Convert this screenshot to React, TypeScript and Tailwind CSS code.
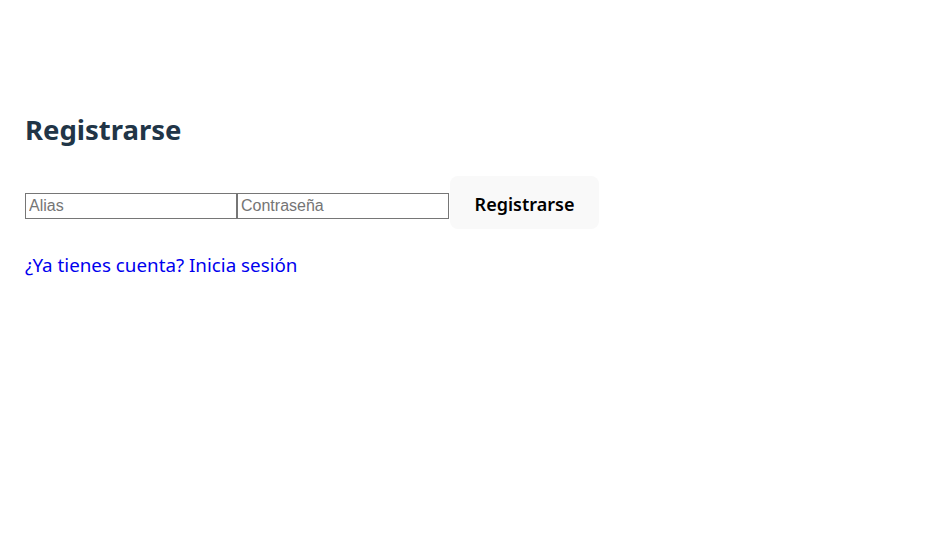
export default function App() {
  return (
    <div className="min-h-screen bg-white px-[25px] pt-[104px] font-['Noto_Sans',sans-serif]">
      <h1 className="text-[27.5px] font-bold leading-[52px] text-[#213547]">Registrarse</h1>

      <form className="mt-[27px] flex items-center" onSubmit={(e) => e.preventDefault()}>
        <input
          type="text"
          placeholder="Alias"
          className="h-[26px] w-[212px] border border-[#767676] px-[3px] font-['Liberation_Sans',Arial,sans-serif] text-[16px] text-black placeholder:text-[#757575] outline-none"
        />
        <input
          type="password"
          placeholder="Contraseña"
          className="h-[26px] w-[212px] border border-[#767676] px-[3px] font-['Liberation_Sans',Arial,sans-serif] text-[16px] text-black placeholder:text-[#757575] outline-none"
        />
        <button
          type="submit"
          className="ml-px -mt-[7px] h-[53px] w-[149px] rounded-[8px] bg-[#f9f9f9] pt-[3px] text-[18px] font-semibold text-black"
        >
          Registrarse
        </button>
      </form>

      <a href="#" className="mt-[22px] block text-[18.8px] leading-[28px] text-[#0000ee]">
        ¿Ya tienes cuenta? Inicia sesión
      </a>
    </div>
  );
}
